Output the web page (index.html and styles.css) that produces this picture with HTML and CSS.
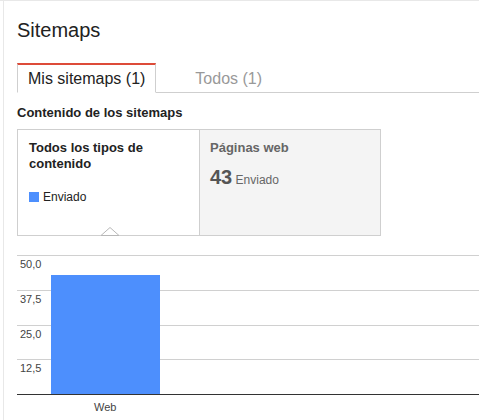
FILE: index.html
```html
<!DOCTYPE html>
<html lang="es">
<head>
<meta charset="utf-8">
<title>Sitemaps</title>
<link rel="stylesheet" href="styles.css">
</head>
<body>
<div class="page">
  <h1 class="title">Sitemaps</h1>
  <div class="tabs">
    <div class="tab tab-active">Mis sitemaps (1)</div>
    <div class="tab">Todos (1)</div>
  </div>
  <h2 class="section">Contenido de los sitemaps</h2>
  <div class="summary">
    <div class="cell cell-active">
      <div class="cell-title">Todos los tipos de<br>contenido</div>
      <div class="legend"><span class="swatch"></span>Enviado</div>
      <svg class="caret" width="18" height="9" viewBox="0 0 18 9"><polygon points="0,8.5 9,0.5 18,8.5" fill="#fff" stroke="#b8b8b8" stroke-width="1"/></svg>
    </div>
    <div class="cell cell-other">
      <div class="cell-title muted">Páginas web</div>
      <div class="stat"><span class="num">43</span> Enviado</div>
    </div>
  </div>
  <div class="chart">
    <div class="row r1"><span class="lbl">50,0</span></div>
    <div class="row r2"><span class="lbl">37,5</span></div>
    <div class="row r3"><span class="lbl">25,0</span></div>
    <div class="row r4"><span class="lbl">12,5</span></div>
    <div class="axis"></div>
    <div class="xlabels"><span class="xlbl">Web</span></div>
    <div class="bar" style="height:119px"></div>
  </div>
</div>
</body>
</html>
```
FILE: styles.css
```css
html, body {
  margin: 0;
  padding: 0;
  background: #fff;
}
body {
  border-top: 1px solid #e8e8e8;
  font-family: "Liberation Sans", Arial, sans-serif;
  color: #222;
}
.page {
  margin-left: 3px;
  border-left: 1px solid #e8e8e8;
  padding-left: 13px;
  min-height: 419px;
  box-sizing: border-box;
}
.title {
  margin: 0;
  padding-top: 17px;
  font-size: 20px;
  line-height: 24px;
  font-weight: normal;
  color: #222;
}
.tabs {
  display: flex;
  margin-top: 21px;
  border-bottom: 1px solid #cfcfcf;
}
.tab {
  font-size: 16px;
  line-height: 27px;
  padding: 0 10px;
  border-top: 2px solid transparent;
  color: #999;
}
.tab-active {
  border-top-color: #dd4b39;
  border-left: 1px solid #cfcfcf;
  border-right: 1px solid #cfcfcf;
  border-bottom: 1px solid #fff;
  margin-bottom: -1px;
  color: #222;
}
.tab + .tab {
  margin-left: 29px;
}
.section {
  margin: 12px 0 8px;
  font-size: 13px;
  line-height: 16px;
  font-weight: bold;
  color: #222;
}
.summary {
  display: flex;
  width: 364px;
  height: 107px;
  border: 1px solid #cfcfcf;
  box-sizing: border-box;
}
.cell {
  position: relative;
  padding: 10px 11px 0;
}
.cell-active {
  width: 182px;
  box-sizing: border-box;
  border-right: 1px solid #cfcfcf;
  background: #fff;
}
.cell-other {
  flex: 1;
  background: #f4f4f4;
  padding-left: 10px;
}
.cell-title {
  font-size: 13px;
  line-height: 16px;
  font-weight: bold;
  color: #222;
}
.cell-title.muted {
  color: #666;
}
.legend {
  display: flex;
  align-items: center;
  margin-top: 17px;
  font-size: 12px;
  line-height: 16px;
  color: #222;
}
.swatch {
  width: 10px;
  height: 10px;
  background: #4d8ffd;
  margin-right: 4px;
}
.caret {
  position: absolute;
  left: 83px;
  bottom: -1px;
  display: block;
}
.stat {
  margin-top: 10px;
  font-size: 12px;
  line-height: 22px;
  color: #666;
}
.num {
  font-size: 20px;
  font-weight: bold;
  color: #555;
}
.chart {
  position: relative;
  margin-top: 19px;
}
.row {
  border-top: 1px solid #d0d0d0;
  box-sizing: border-box;
  height: 35px;
  padding-top: 2px;
}
.row.r3 {
  height: 34px;
}
.lbl {
  display: block;
  margin-left: 3px;
  font-size: 11px;
  line-height: 13px;
  color: #444;
}
.axis {
  border-top: 1px solid #333;
}
.xlabels {
  padding-left: 77px;
  padding-top: 2px;
}
.xlbl {
  font-size: 11px;
  line-height: 13px;
  color: #444;
}
.bar {
  position: absolute;
  left: 34px;
  top: 20px;
  width: 109px;
  background: #4d8ffd;
}
```
